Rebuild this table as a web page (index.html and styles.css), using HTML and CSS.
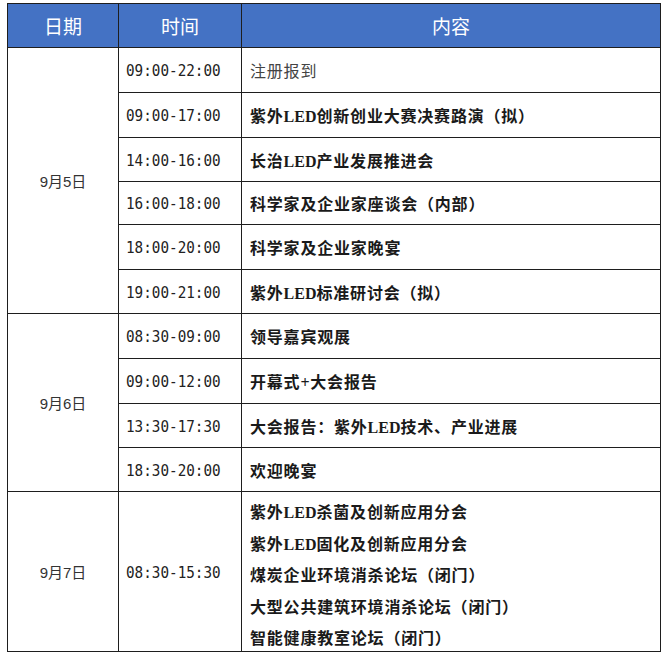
FILE: index.html
```html
<!DOCTYPE html>
<html lang="zh">
<head>
<meta charset="utf-8">
<title>日程</title>
<link rel="stylesheet" href="styles.css">
</head>
<body>
<table class="schedule">
  <colgroup>
    <col class="c-date">
    <col class="c-time">
    <col class="c-content">
  </colgroup>
  <thead>
    <tr class="head">
      <th>日期</th>
      <th>时间</th>
      <th>内容</th>
    </tr>
  </thead>
  <tbody>
    <tr class="h44">
      <td class="date" rowspan="6">9月5日</td>
      <td class="time"><span class="tt">09:00-22:00</span></td>
      <td class="item plain">注册报到</td>
    </tr>
    <tr class="h44">
      <td class="time"><span class="tt">09:00-17:00</span></td>
      <td class="item">紫外<span class="lat">LED</span>创新创业大赛决赛路演（拟）</td>
    </tr>
    <tr class="h43">
      <td class="time"><span class="tt">14:00-16:00</span></td>
      <td class="item">长治<span class="lat">LED</span>产业发展推进会</td>
    </tr>
    <tr class="h42">
      <td class="time"><span class="tt">16:00-18:00</span></td>
      <td class="item">科学家及企业家座谈会（内部）</td>
    </tr>
    <tr class="h44">
      <td class="time"><span class="tt">18:00-20:00</span></td>
      <td class="item">科学家及企业家晚宴</td>
    </tr>
    <tr class="h43">
      <td class="time"><span class="tt">19:00-21:00</span></td>
      <td class="item">紫外<span class="lat">LED</span>标准研讨会（拟）</td>
    </tr>
    <tr class="h44">
      <td class="date" rowspan="4">9月6日</td>
      <td class="time"><span class="tt">08:30-09:00</span></td>
      <td class="item">领导嘉宾观展</td>
    </tr>
    <tr class="h44">
      <td class="time"><span class="tt">09:00-12:00</span></td>
      <td class="item">开幕式+大会报告</td>
    </tr>
    <tr class="h43">
      <td class="time"><span class="tt">13:30-17:30</span></td>
      <td class="item">大会报告：紫外<span class="lat">LED</span>技术、产业进展</td>
    </tr>
    <tr class="h43">
      <td class="time"><span class="tt">18:30-20:00</span></td>
      <td class="item">欢迎晚宴</td>
    </tr>
    <tr class="h159">
      <td class="date">9月7日</td>
      <td class="time"><span class="tt">08:30-15:30</span></td>
      <td class="item multi">
        <div class="lines">
          <div>紫外<span class="lat">LED</span>杀菌及创新应用分会</div>
          <div>紫外<span class="lat">LED</span>固化及创新应用分会</div>
          <div>煤炭企业环境消杀论坛（闭门）</div>
          <div>大型公共建筑环境消杀论坛（闭门）</div>
          <div>智能健康教室论坛（闭门）</div>
        </div>
      </td>
    </tr>
  </tbody>
</table>
</body>
</html>
```
FILE: styles.css
```css
html, body {
  margin: 0;
  padding: 0;
  background: #ffffff;
}

body {
  padding: 3px 0 0 7px;
}

.schedule {
  border-collapse: collapse;
  table-layout: fixed;
  width: 653px;
  border: 1px solid #5a5a5a;
}

.c-date { width: 111px; }
.c-time { width: 123px; }
.c-content { width: 419px; }

.schedule th,
.schedule td {
  border: 1px solid #1e1e1e;
  padding: 0;
}

.head th {
  height: 43px;
  background: #4472c4;
  color: #ffffff;
  font-family: "Noto Sans CJK SC", "Noto Sans", sans-serif;
  font-weight: 400;
  font-size: 19px;
  text-align: center;
  vertical-align: middle;
}

.h42 td { height: 42px; }
.h43 td { height: 43px; }
.h44 td { height: 44px; }
.h159 td { height: 159px; }

.date {
  text-align: center;
  vertical-align: middle;
  font-family: "Liberation Sans", "Noto Sans CJK SC", sans-serif;
  font-size: 15px;
  color: #333;
}

.schedule .time {
  padding-left: 7px;
  vertical-align: middle;
}

.tt {
  display: inline-block;
  font-family: "DejaVu Sans Mono", "Liberation Mono", monospace;
  font-size: 14.3px;
  color: #222;
  transform: scaleY(1.15);
}

.schedule .item {
  padding-left: 8px;
  font-family: "Liberation Serif", "Noto Sans CJK SC", serif;
  font-weight: 700;
  font-size: 16px;
  letter-spacing: 0.8px;
  color: #1a1a1a;
  vertical-align: middle;
}

.schedule .item.plain {
  font-weight: 400;
  color: #444;
}

.lat {
  letter-spacing: 0;
}

.schedule .item.multi {
  vertical-align: top;
}

.lines {
  height: 159px;
  box-sizing: border-box;
  padding-top: 5px;
  line-height: 31.5px;
}
```
